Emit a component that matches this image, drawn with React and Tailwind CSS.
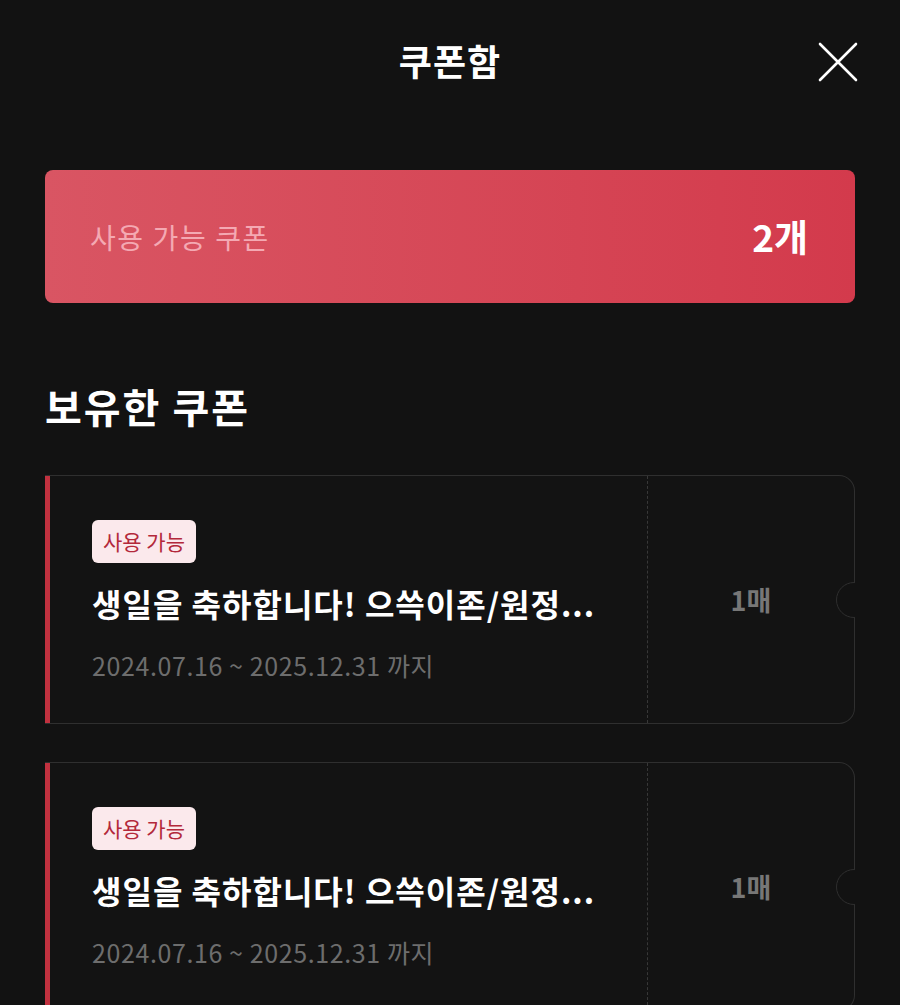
import React from 'react';

const coupons = [
    { id: 1, title: '생일을 축하합니다! 으쓱이존/원정...', period: '2024.07.16 ~ 2025.12.31 까지', count: '1매' },
    { id: 2, title: '생일을 축하합니다! 으쓱이존/원정...', period: '2024.07.16 ~ 2025.12.31 까지', count: '1매' },
];

const CouponCard = ({ coupon }) => (
    <div className="relative flex h-[249px] shrink-0 rounded-r-[16px] border border-l-0 border-[#2f2f2f] bg-[#131313]">
        {/* red edge */}
        <div className="w-[5px] shrink-0 bg-[#c1313f]" />

        {/* main */}
        <div className="flex w-[598px] flex-col border-r border-dashed border-[#383838] pl-[42px] pt-[44px]">
            <span className="self-start rounded-[6px] bg-[#fbe9ec] px-[11px] py-[6px] text-[21px] leading-[31px] text-[#b3283a]">
                사용 가능
            </span>
            <p className="mt-[19px] text-[32px] font-semibold leading-[42px] tracking-[1px] text-white">{coupon.title}</p>
            <p className="mt-[24px] text-[25px] leading-[34px] tracking-[0.6px] text-[#6d6d6d]">{coupon.period}</p>
        </div>

        {/* count */}
        <div className="flex flex-1 items-center justify-center pt-[2px]">
            <span className="text-[27px] font-semibold text-[#777777]">{coupon.count}</span>
        </div>

        {/* notch */}
        <div className="absolute right-[-1px] top-1/2 h-[36px] w-[19px] -translate-y-1/2 overflow-hidden">
            <div className="h-[36px] w-[36px] rounded-full border border-[#2f2f2f] bg-[#121212]" />
        </div>
    </div>
);

const App = () => {
    return (
        <div
            className="h-[1005px] overflow-hidden bg-[#121212] px-[45px]"
            style={{ fontFamily: '"Noto Sans CJK KR", "Noto Sans", sans-serif' }}
        >
            {/* Header */}
            <div className="relative flex h-[120px] items-center justify-center">
                <h1 className="text-[36px] font-bold tracking-[1px] text-white">쿠폰함</h1>
                <button className="absolute right-[-4px] top-[41px] flex h-[42px] w-[42px] items-center justify-center">
                    <svg width="40" height="40" viewBox="0 0 40 40" fill="none" stroke="white" strokeWidth="2.6" strokeLinecap="round">
                        <path d="M2 2 L38 38 M38 2 L2 38" />
                    </svg>
                </button>
            </div>

            {/* Summary banner */}
            <div className="mt-[50px] flex h-[133px] items-center justify-between rounded-[8px] bg-gradient-to-r from-[#d95563] to-[#d33a4c] pl-[45px] pr-[47px]">
                <span className="text-[28px] tracking-[1.6px] text-[#f4a9b3]">사용 가능 쿠폰</span>
                <span className="text-[37px] font-bold text-white">2개</span>
            </div>

            <h2 className="mt-[78px] text-[40px] font-bold leading-[50px] tracking-[2px] text-white">보유한 쿠폰</h2>

            <div className="mt-[44px] flex flex-col gap-[38px]">
                {coupons.map((c) => (
                    <CouponCard key={c.id} coupon={c} />
                ))}
            </div>
        </div>
    );
};

export default App;
